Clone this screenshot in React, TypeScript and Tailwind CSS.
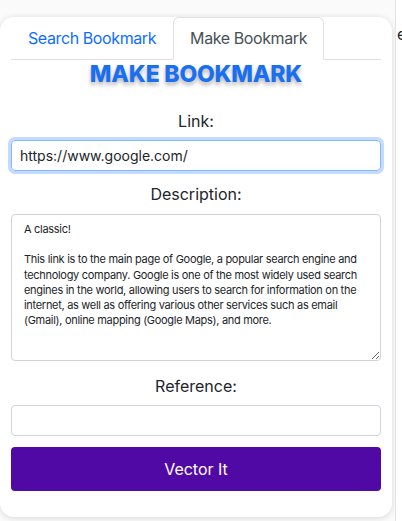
import React from "react";

const desc = `A classic!

This link is to the main page of Google, a popular search engine and technology company. Google is one of the most widely used search engines in the world, allowing users to search for information on the internet, as well as offering various other services such as email (Gmail), online mapping (Google Maps), and more.`;

export default function App() {
  return (
    <div className="w-[402px] h-[521px] bg-[#fafafa] flex overflow-hidden font-['Inter',sans-serif] text-[#212529]">
      <div className="pt-[17px] w-[392px] shrink-0">
        <div className="h-[500px] bg-white rounded-[14px] shadow-[0_1px_6px_rgba(0,0,0,0.14)] px-[11px] flex flex-col">
          <div className="flex border-b border-[#dee2e6]">
            <div className="px-[16px] py-[8px] text-[16px] leading-[24px] tracking-[-0.4px] text-[#0d6efd] border border-transparent">
              Search Bookmark
            </div>
            <div className="px-[16px] py-[8px] text-[16px] leading-[24px] tracking-[-0.4px] text-[#495057] border border-[#dee2e6] border-b-white rounded-t-[6px] -mb-px bg-white">
              Make Bookmark
            </div>
          </div>
          <h1 className="text-center text-[23px] leading-[28px] font-extrabold tracking-[-0.2px] text-[#1a6ef0] [text-shadow:0_3px_4px_rgba(0,0,0,0.3)]">
            MAKE BOOKMARK
          </h1>
          <label className="text-center text-[16px] leading-[24px] mt-[21px]">Link:</label>
          <input
            className="mt-[7px] h-[31px] w-full rounded-[4px] border border-[#86b7fe] px-[8px] text-[14px] outline-none shadow-[0_0_0_3px_rgba(13,110,253,0.25)]"
            defaultValue="https://www.google.com/"
          />
          <label className="text-center text-[16px] leading-[24px] mt-[11px]">Description:</label>
          <textarea
            className="mt-[8px] h-[147px] w-full rounded-[4px] border border-[#ced4da] pl-[12px] pr-[8px] pt-[7px] text-[11px] leading-[15.2px] tracking-[-0.3px] text-[#212529] outline-none resize-y"
            defaultValue={desc}
          />
          <label className="text-center text-[16px] leading-[24px] mt-[13px]">Reference:</label>
          <input className="mt-[7px] h-[31px] w-full rounded-[4px] border border-[#ced4da] px-[8px] text-[14px] outline-none" />
          <button className="mt-[11px] h-[44px] w-full rounded-[4px] bg-[#5109a6] text-white text-[16px]">
            Vector It
          </button>
        </div>
      </div>
      <div className="w-[3px] shrink-0" />
      <div className="w-px bg-[#e4e4e4] shrink-0" />
      <div className="pt-[24px] pl-[1px] text-[16px] leading-[20px] text-[#222] bg-white flex-1 overflow-hidden">e</div>
    </div>
  );
}
